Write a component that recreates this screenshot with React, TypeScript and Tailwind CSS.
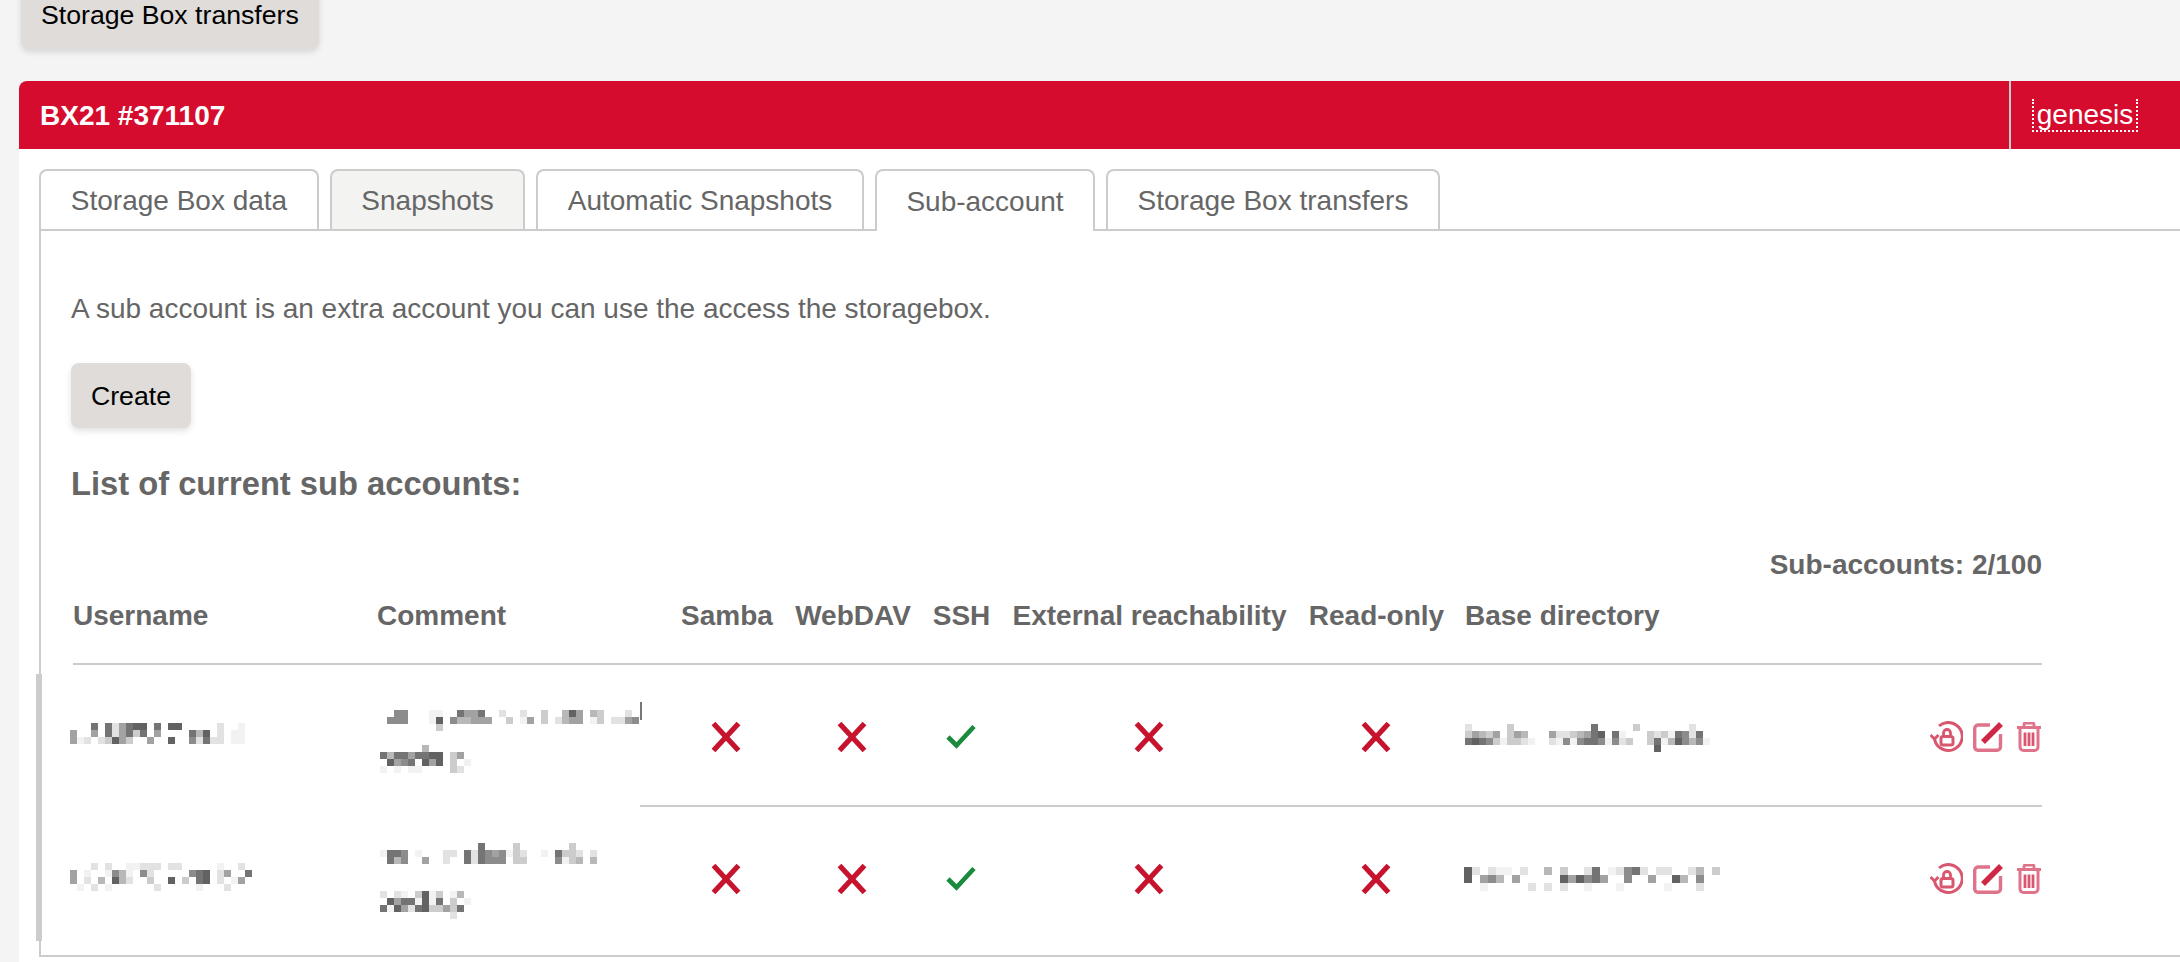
const shades: Record<string, string> = {
  "1": "bg-[#f2f2f2]",
  "2": "bg-[#e2e2e2]",
  "3": "bg-[#cccccc]",
  "4": "bg-[#b8b8b8]",
  "5": "bg-[#a2a2a2]",
  "6": "bg-[#8c8c8c]",
  "7": "bg-[#747474]",
  "8": "bg-[#626262]",
};

// redacted text in the screenshot, one string per row of mosaic cells
function Mosaic({ rows, big = false, className = "" }: { rows: string[]; big?: boolean; className?: string }) {
  const size = big ? "w-[8px] h-[8px]" : "w-[7px] h-[7px]";
  return (
    <div className={`flex flex-col blur-[0.6px] ${className}`}>
      {rows.map((row, y) => (
        <div key={y} className="flex">
          {row.split("").map((c, x) => (
            <div key={x} className={`${size} ${shades[c] ?? ""}`} />
          ))}
        </div>
      ))}
    </div>
  );
}

function Cross() {
  return (
    <svg width="30" height="30" viewBox="0 0 30 30" fill="none">
      <path d="M2.5 1.500 27.500 28.500M27.500 1.500 2.500 28.500" stroke="#c6142f" strokeWidth="5.200" />
    </svg>
  );
}

function Check() {
  return (
    <svg width="30" height="24" viewBox="0 0 30 24" fill="none">
      <path d="M2 12 10.500 20.500 28 1.500" stroke="#1a8a3e" strokeWidth="4.600" />
    </svg>
  );
}

function ResetIcon() {
  return (
    <svg width="33" height="32" viewBox="0 0 33 32" fill="none" stroke="#d9566f">
      <path d="M9 5A14 14 0 1 1 4.500 18" strokeWidth="3" />
      <path d="M0.500 14 4.500 18 8.500 14" strokeWidth="3" />
      <rect x="11" y="15.500" width="12" height="8.500" rx="2" strokeWidth="3" />
      <path d="M13.500 15v-3a3.500 3.500 0 0 1 7 0v3" strokeWidth="2.800" />
    </svg>
  );
}

function EditIcon() {
  return (
    <svg width="30" height="30" viewBox="0 0 30 30" fill="none">
      <path d="M17 3H5A3.500 3.500 0 0 0 1.700 6.500V25A3.500 3.500 0 0 0 5 28.300H24A3.500 3.500 0 0 0 27.500 25V12" stroke="#df7389" strokeWidth="3.400" />
      <path d="M10 20 28 2" stroke="#cf2746" strokeWidth="5.500" />
    </svg>
  );
}

function TrashIcon() {
  return (
    <svg width="26" height="30" viewBox="0 0 26 30" fill="none" stroke="#df7389">
      <path d="M1 5.500H25" strokeWidth="3" />
      <path d="M8 5V2.500A1.500 1.500 0 0 1 9.500 1H16.500A1.500 1.500 0 0 1 18 2.500V5" strokeWidth="2.800" />
      <path d="M4 6V25A3.500 3.500 0 0 0 7.500 28.500H18.500A3.500 3.500 0 0 0 22 25V6" strokeWidth="3" />
      <path d="M9 10.500V24M13 10.500V24M17 10.500V24" stroke="#d9566f" strokeWidth="2.800" />
    </svg>
  );
}

const gridCols = "grid grid-cols-[304px_292px_114px_138px_79px_297px_157px_588px]";

const tabs = [
  { label: "Storage Box data", width: "w-[280px]", style: "bg-white" },
  { label: "Snapshots", width: "w-[195px]", style: "bg-[#f3f3f2]" },
  { label: "Automatic Snapshots", width: "w-[328px]", style: "bg-white" },
  { label: "Sub-account", width: "w-[220px]", style: "bg-white relative h-[62px] -mb-[2px] border-b-0" },
  { label: "Storage Box transfers", width: "w-[334px]", style: "bg-white" },
];

const headers = ["Samba", "WebDAV", "SSH", "External reachability", "Read-only"];

function Row({ flags, dir }: { flags: boolean[]; dir: React.ReactNode }) {
  return (
    <>
      {flags.map((ok, i) => (
        <div key={i} className="flex justify-center items-center pt-[4px]">
          {ok ? <Check /> : <Cross />}
        </div>
      ))}
      <div className="flex justify-between pl-[11px]">
        {dir}
        <div className="flex items-center gap-[10px] pt-[4px]">
          <ResetIcon />
          <EditIcon />
          <div className="ml-[3px]">
            <TrashIcon />
          </div>
        </div>
      </div>
    </>
  );
}

export default function App() {
  return (
    <div className="h-[962px] overflow-hidden bg-[#f4f4f4] font-['Liberation_Sans',Arial,sans-serif] text-[28px] leading-[32px] flex flex-col">
      <button className="ml-[21px] -mt-[16px] h-[65px] w-[298px] rounded-[8px] bg-[#dfdcd9] text-black text-[26.67px] text-left pl-[20px] pb-[3px] shadow-[0_3px_6px_rgba(0,0,0,0.12)] shrink-0">
        Storage Box transfers
      </button>

      <div className="ml-[19px] mt-[32px] flex-1 bg-white flex flex-col rounded-tl-[8px]">
        <div className="h-[68px] bg-[#d50c2d] rounded-tl-[8px] flex justify-between text-white shrink-0">
          <div className="pl-[21px] pt-[1px] font-bold flex items-center">BX21 #371107</div>
          <div className="w-[171px] border-l-2 border-[#cccccc] pl-[21px] pt-[18px]">
            <span className="block w-[106px] h-[33px] border-x-2 border-b-2 border-dotted border-white text-center leading-[32px] overflow-visible">
              genesis
            </span>
          </div>
        </div>

        <div className="flex gap-[11px] pl-[20px] pt-[20px] items-start relative z-10">
          {tabs.map((tab) => (
            <div
              key={tab.label}
              className={`h-[60px] border-2 border-b-0 border-[#cccccc] rounded-t-[8px] text-[#666666] flex items-center justify-center pt-[2px] ${tab.width} ${tab.style}`}
            >
              {tab.label}
            </div>
          ))}
        </div>

        <div className="relative ml-[20px] h-[728px] border-l-2 border-t-2 border-b-2 border-[#cccccc] pl-[30px] text-[#666666]">
          <div className="absolute -left-[5px] top-[443px] w-[6px] h-[267px] bg-[#cccccc]" />
          <p className="pt-[62px]">A sub account is an extra account you can use the access the storagebox.</p>
          <button className="mt-[38px] h-[65px] w-[120px] rounded-[8px] bg-[#dfdcd9] text-black text-[26.67px] shadow-[0_3px_6px_rgba(0,0,0,0.12)] block">
            Create
          </button>
          <h2 className="mt-[36px] text-[32.7px] leading-[40px] font-bold">List of current sub accounts:</h2>

          <div className="ml-[2px] w-[1969px]">
            <div className="mt-[45px] text-right font-bold">Sub-accounts: 2/100</div>
            <div className={`${gridCols} mt-[19px] pb-[31px] border-b-2 border-[#cccccc] font-bold`}>
              <div>Username</div>
              <div>Comment</div>
              {headers.map((h) => (
                <div key={h} className="text-center whitespace-nowrap pl-[2px]">
                  {h}
                </div>
              ))}
              <div className="pl-[11px]">Base directory</div>
            </div>

            <div className={`${gridCols} h-[140px]`}>
              <Mosaic
                className="pt-[58px] -ml-[3px]"
                rows={[
                  "...7.725788.7.88.....2..1.",
                  "5..5.725737.5....748.2.11.",
                  "512.23853..5..8..62722.11.",
                ]}
              />
              <div className="relative pl-[3px] pt-[45px]">
                <Mosaic
                  rows={[
                    "..66...11..7557..2..2..3..485.43...2",
                    ".666...18.644555..3.15.3.2455.13.2256",
                    "........3",
                  ]}
                />
                <Mosaic className="mt-[14px]" rows={["......4", "747757788.35", ".8567.858.3.1", "1.1.11....32"]} />
                <div className="absolute left-[263px] top-[37px] w-[2px] h-[18px] bg-[#777777]" />
              </div>
              <Row
                flags={[false, false, true, false, false]}
                dir={
                  <Mosaic
                    className="pt-[59px]"
                    rows={[
                      "2.....3...........7.....3.......2",
                      "35435.354...52234578.71...32317627",
                      "7876313321..216167761623..371486461",
                      "...........................8",
                    ]}
                  />
                }
              />
            </div>

            <div className="h-[2px] bg-[#cccccc] ml-[567px]" />

            <div className={`${gridCols} h-[140px]`}>
              <Mosaic
                className="pt-[56px] -ml-[3px]"
                rows={[
                  "...2.2..11222.22.....1..2.",
                  "5.1..1641.62.....678.25..7",
                  "5.2.4.842..3..8.3.78.2.15.",
                  ".1.2.1......2.....1...2...",
                ]}
              />
              <div className="pl-[3px] pt-[36px]">
                <Mosaic
                  rows={[
                    "..............7....3.......3",
                    "1776.1...22.727656132..1.7332.2",
                    ".746..5..2..727666.33....6134.4",
                  ]}
                />
                <Mosaic
                  className="mt-[27px]"
                  rows={["2.21.3813.14", ".85771817.3.1", "718527833537", "..........2"]}
                />
              </div>
              <Row
                flags={[false, false, true, false, false]}
                dir={
                  <Mosaic
                    big
                    className="pt-[60px] -ml-[1px]"
                    rows={[
                      "82.211.2..4.3..27.12672.22..24.3",
                      "8.564.5.....858675..6..5..84.6",
                      "..1.....2.2.2..1...1.....1...2",
                    ]}
                  />
                }
              />
            </div>
          </div>
        </div>
      </div>
    </div>
  );
}
